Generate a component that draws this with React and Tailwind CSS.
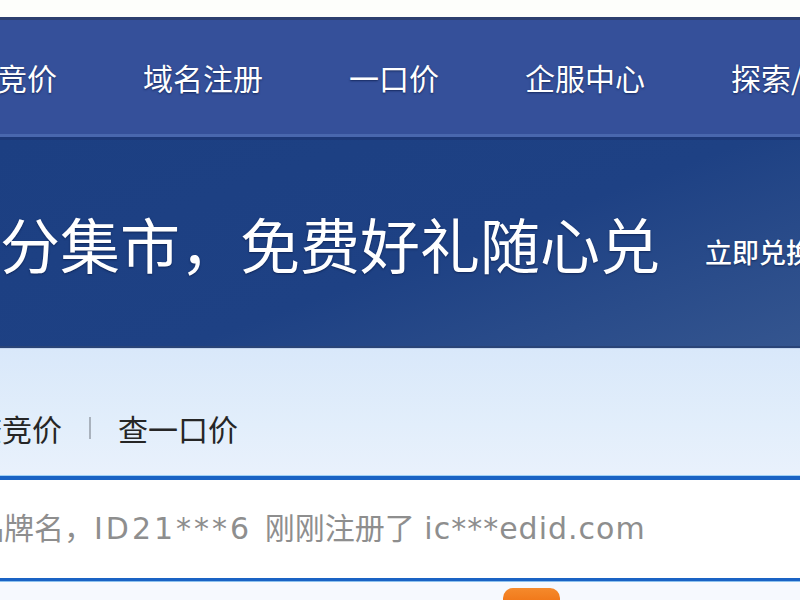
import React from "react";

const cjk = "font-['Noto_Sans_CJK_SC','Noto_Sans',sans-serif]";

export default function App() {
  const nav = ["域名竞价", "域名注册", "一口价", "企服中心", "探索/发现"];

  return (
    <div className={`w-[800px] h-[600px] overflow-hidden bg-[#f6f9fe] ${cjk}`}>
      {/* top strip */}
      <div className="h-[20px] bg-[#fdfefb] border-b-[3px] border-[#2c3f6f]" />

      {/* nav bar */}
      <nav className="h-[114px] bg-[#35509a] flex items-center overflow-hidden">
        <div className="flex items-center gap-[86px] ml-[-63px] whitespace-nowrap">
          {nav.map((item) => (
            <span
              key={item}
              className="text-[30px] leading-none text-white [text-shadow:0_1px_2px_rgba(10,25,70,0.7)]"
            >
              {item}
            </span>
          ))}
        </div>
      </nav>
      <div className="h-[3px] bg-[#4967ae]" />
      <div className="h-[3px] bg-[#1c3878]" />

      {/* banner */}
      <section className="h-[208px] bg-[linear-gradient(160deg,#1c3f82_0%,#1e4184_55%,#34558f_100%)] flex items-center overflow-hidden border-b-[2px] border-[#2a4477]">
        <div className="flex items-center whitespace-nowrap ml-[-60px]">
          <span className="text-[60px] leading-none text-white [text-shadow:0_1px_2px_rgba(5,20,60,0.6)]">
            积分集市，免费好礼随心兑
          </span>
          <span className="ml-[45px] pt-[16px] text-[27px] leading-none text-white font-medium [text-shadow:0_1px_2px_rgba(5,20,60,0.6)]">
            立即兑换
          </span>
        </div>
      </section>

      {/* quick links */}
      <section className="h-[127px] bg-[linear-gradient(180deg,#d9e8fa_0%,#e2eefb_60%,#e9f1fc_100%)] border-t border-[#c4d6ef] overflow-hidden">
        <div className="flex items-center whitespace-nowrap ml-[-28px] pt-[64px] text-[30px] leading-none text-[#262626]">
          <span>查竞价</span>
          <span className="mx-[27px] w-[2px] h-[22px] bg-[#a9b2bd]" />
          <span>查一口价</span>
        </div>
      </section>

      {/* ticker */}
      <div className="h-[5px] bg-[#1a63c4] border-t border-[#9fd0f5]" />
      <section className="h-[98px] bg-white overflow-hidden">
        <div className="whitespace-nowrap ml-[-26px] pt-[34px] text-[30px] leading-none text-[#8e8e8e] font-['DejaVu_Sans','Noto_Sans_CJK_SC',sans-serif]">
          <span>品牌名，</span>
          <span className="tracking-[3px]">ID21***6 </span>
          <span>刚刚注册了 </span>
          <span className="tracking-[1px]">ic***edid.com</span>
        </div>
      </section>
      <div className="h-[4px] bg-[#1a63c4] border-b border-[#8cc1ee]" />

      {/* bottom */}
      <div className="flex pt-[6px] pl-[503px]">
        <button className="w-[57px] h-[20px] rounded-t-[10px] bg-[linear-gradient(180deg,#f58a2c,#ef6f10)]" />
      </div>
    </div>
  );
}
